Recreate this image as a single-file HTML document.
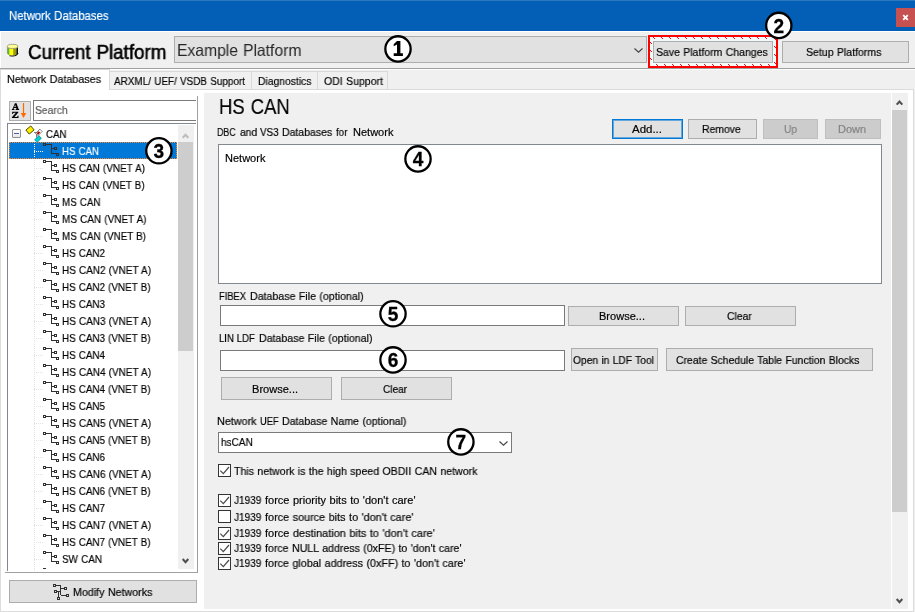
<!DOCTYPE html>
<html><head><meta charset="utf-8"><title>Network Databases</title>
<style>
html,body{margin:0;padding:0;}
body{width:915px;height:612px;position:relative;overflow:hidden;background:#f0f0f0;font-family:"Liberation Sans",sans-serif;}
.b{position:absolute;box-sizing:border-box;}
.t{position:absolute;white-space:pre;will-change:transform;transform-origin:0 0;-webkit-text-stroke:0.18px currentColor;font-family:"Liberation Sans",sans-serif;}
</style></head><body>
<div class="b" style="left:0px;top:0px;width:915px;height:31px;background:#035fb5;border-top:1px solid #2a78c2;"></div>
<div class="b" style="left:0px;top:31px;width:1px;height:58px;background:#fff;"></div>
<div class="b" style="left:0px;top:31px;width:915px;height:1px;background:#fff;"></div>
<div class="b" style="left:896px;top:8px;width:19px;height:19px;background:#c75050;"><svg width="19" height="19" style="position:absolute;left:0;top:0"><path d="M7.2 7.2 L11.8 11.8 M11.8 7.2 L7.2 11.8" stroke="#fff" stroke-width="1.8" fill="none"/></svg></div>
<div class="b" style="left:0px;top:68px;width:915px;height:1px;background:#a0a0a0;"></div>
<div class="b" style="left:0px;top:69px;width:915px;height:1px;background:#ffffff;"></div>
<div class="b" style="left:174px;top:36px;width:473px;height:27px;background:#e1e1e1;border:1px solid #adadad;"><svg width="12" height="8" style="position:absolute;left:458px;top:10px"><path d="M1.5 1.5 L5.5 5.2 L9.5 1.5" stroke="#444" stroke-width="1.1" fill="none"/></svg></div>
<div class="b" style="left:648px;top:35px;width:130px;height:33px;border:2px solid #f00;background:repeating-linear-gradient(45deg,#f2fbfb 0 4.98px,#f00 4.98px 5.66px);"></div>
<div class="b" style="left:652px;top:39px;width:122px;height:25px;background:#f2fbfb;"></div>
<div class="b" style="left:653px;top:41px;width:120px;height:22px;background:#e1e1e1;border:1px solid #adadad;"></div>
<div class="b" style="left:782px;top:41px;width:127px;height:22px;background:#e1e1e1;border:1px solid #adadad;"></div>
<div class="b" style="left:0px;top:89px;width:914px;height:523px;background:#fff;border:1px solid #dcdcdc;"></div>
<div class="b" style="left:109px;top:71px;width:143px;height:19px;background:#f0f0f0;border:1px solid #d9d9d9;"></div>
<div class="b" style="left:251px;top:71px;width:67px;height:19px;background:#f0f0f0;border:1px solid #d9d9d9;"></div>
<div class="b" style="left:317px;top:71px;width:71px;height:19px;background:#f0f0f0;border:1px solid #d9d9d9;"></div>
<div class="b" style="left:0px;top:69px;width:110px;height:21px;background:#fff;border:1px solid #d9d9d9;border-bottom:none;"></div>
<div class="b" style="left:9px;top:101px;width:22px;height:20px;background:#e1e1e1;border:1px solid #adadad;"></div>
<div class="b" style="left:33px;top:100px;width:163px;height:21px;background:#fff;border:1px solid #7a7a7a;border-right:none;"></div>
<div class="b" style="left:7px;top:123px;width:189px;height:448px;background:#fff;border:1px solid #828790;border-right:none;border-bottom:none;"></div>
<div class="b" style="left:197px;top:96px;width:1px;height:477px;background:#a0a0a0;"></div>
<div class="b" style="left:5px;top:572px;width:193px;height:1px;background:#a0a0a0;"></div>
<div class="b" style="left:178px;top:125px;width:16px;height:444px;background:#f0f0f0;"></div>
<div class="b" style="left:178px;top:142px;width:15px;height:209px;background:#cdcdcd;"></div>
<div class="b" style="left:9px;top:142px;width:168px;height:17px;background:#0078d7;outline:1px dotted #ff8728;outline-offset:-1px;"></div>
<div class="b" style="left:9px;top:580px;width:188px;height:23px;background:#e1e1e1;border:1px solid #adadad;"></div>
<div class="b" style="left:204px;top:93px;width:687px;height:516px;background:#f0f0f0;"></div>
<div class="b" style="left:892px;top:93px;width:16px;height:516px;background:#f0f0f0;"></div>
<div class="b" style="left:892px;top:110px;width:15px;height:402px;background:#cdcdcd;"></div>
<div class="b" style="left:612px;top:119px;width:71px;height:20px;background:#e1e1e1;border:1px solid #0078d7;box-shadow:inset 0 0 0 1px rgba(0,120,215,.55);"></div>
<div class="b" style="left:688px;top:119px;width:69px;height:20px;background:#e1e1e1;border:1px solid #adadad;"></div>
<div class="b" style="left:763px;top:119px;width:55px;height:20px;background:#cccccc;border:1px solid #bfbfbf;"></div>
<div class="b" style="left:825px;top:119px;width:56px;height:20px;background:#cccccc;border:1px solid #bfbfbf;"></div>
<div class="b" style="left:218px;top:144px;width:664px;height:140px;background:#fff;border:1px solid #828790;"></div>
<div class="b" style="left:220px;top:305px;width:345px;height:21px;background:#fff;border:1px solid #7a7a7a;"></div>
<div class="b" style="left:568px;top:306px;width:111px;height:20px;background:#e1e1e1;border:1px solid #adadad;"></div>
<div class="b" style="left:685px;top:306px;width:111px;height:20px;background:#e1e1e1;border:1px solid #adadad;"></div>
<div class="b" style="left:220px;top:350px;width:345px;height:21px;background:#fff;border:1px solid #7a7a7a;"></div>
<div class="b" style="left:571px;top:348px;width:87px;height:23px;background:#e1e1e1;border:1px solid #adadad;"></div>
<div class="b" style="left:666px;top:348px;width:207px;height:23px;background:#e1e1e1;border:1px solid #adadad;"></div>
<div class="b" style="left:221px;top:377px;width:111px;height:23px;background:#e1e1e1;border:1px solid #adadad;"></div>
<div class="b" style="left:341px;top:377px;width:111px;height:23px;background:#e1e1e1;border:1px solid #adadad;"></div>
<div class="b" style="left:218px;top:432px;width:294px;height:21px;background:#fff;border:1px solid #7a7a7a;"><svg width="12" height="8" style="position:absolute;left:279px;top:7px"><path d="M1.5 1.5 L5.5 5.2 L9.5 1.5" stroke="#444" stroke-width="1.1" fill="none"/></svg></div>
<div class="b" style="left:218px;top:464px;width:13px;height:13px;background:#fff;border:1px solid #333;"><svg width="13" height="13" style="position:absolute;left:-1px;top:-1px"><path d="M2.3 6.6 L5.3 9.7 L11 3" stroke="#4a4a4a" stroke-width="1.2" fill="none"/></svg></div>
<div class="b" style="left:218px;top:494px;width:13px;height:13px;background:#fff;border:1px solid #333;"><svg width="13" height="13" style="position:absolute;left:-1px;top:-1px"><path d="M2.3 6.6 L5.3 9.7 L11 3" stroke="#4a4a4a" stroke-width="1.2" fill="none"/></svg></div>
<div class="b" style="left:218px;top:510px;width:13px;height:13px;background:#fff;border:1px solid #333;"></div>
<div class="b" style="left:218px;top:527px;width:13px;height:13px;background:#fff;border:1px solid #333;"><svg width="13" height="13" style="position:absolute;left:-1px;top:-1px"><path d="M2.3 6.6 L5.3 9.7 L11 3" stroke="#4a4a4a" stroke-width="1.2" fill="none"/></svg></div>
<div class="b" style="left:218px;top:542px;width:13px;height:13px;background:#fff;border:1px solid #333;"><svg width="13" height="13" style="position:absolute;left:-1px;top:-1px"><path d="M2.3 6.6 L5.3 9.7 L11 3" stroke="#4a4a4a" stroke-width="1.2" fill="none"/></svg></div>
<div class="b" style="left:218px;top:557px;width:13px;height:13px;background:#fff;border:1px solid #333;"><svg width="13" height="13" style="position:absolute;left:-1px;top:-1px"><path d="M2.3 6.6 L5.3 9.7 L11 3" stroke="#4a4a4a" stroke-width="1.2" fill="none"/></svg></div>
<div class="b" style="left:34px;top:160px;width:1px;height:411px;background:linear-gradient(#e2e2e2 50%,transparent 50%) 0 0/1px 2px;"></div>
<div class="b" style="left:34px;top:151px;width:9px;height:1px;background:linear-gradient(90deg,#fff 50%,transparent 50%) 0 0/2px 1px;"></div>
<div class="b" style="left:34px;top:168px;width:9px;height:1px;background:linear-gradient(90deg,#e2e2e2 50%,transparent 50%) 0 0/2px 1px;"></div>
<div class="b" style="left:34px;top:185px;width:9px;height:1px;background:linear-gradient(90deg,#e2e2e2 50%,transparent 50%) 0 0/2px 1px;"></div>
<div class="b" style="left:34px;top:202px;width:9px;height:1px;background:linear-gradient(90deg,#e2e2e2 50%,transparent 50%) 0 0/2px 1px;"></div>
<div class="b" style="left:34px;top:219px;width:9px;height:1px;background:linear-gradient(90deg,#e2e2e2 50%,transparent 50%) 0 0/2px 1px;"></div>
<div class="b" style="left:34px;top:236px;width:9px;height:1px;background:linear-gradient(90deg,#e2e2e2 50%,transparent 50%) 0 0/2px 1px;"></div>
<div class="b" style="left:34px;top:253px;width:9px;height:1px;background:linear-gradient(90deg,#e2e2e2 50%,transparent 50%) 0 0/2px 1px;"></div>
<div class="b" style="left:34px;top:270px;width:9px;height:1px;background:linear-gradient(90deg,#e2e2e2 50%,transparent 50%) 0 0/2px 1px;"></div>
<div class="b" style="left:34px;top:287px;width:9px;height:1px;background:linear-gradient(90deg,#e2e2e2 50%,transparent 50%) 0 0/2px 1px;"></div>
<div class="b" style="left:34px;top:304px;width:9px;height:1px;background:linear-gradient(90deg,#e2e2e2 50%,transparent 50%) 0 0/2px 1px;"></div>
<div class="b" style="left:34px;top:321px;width:9px;height:1px;background:linear-gradient(90deg,#e2e2e2 50%,transparent 50%) 0 0/2px 1px;"></div>
<div class="b" style="left:34px;top:338px;width:9px;height:1px;background:linear-gradient(90deg,#e2e2e2 50%,transparent 50%) 0 0/2px 1px;"></div>
<div class="b" style="left:34px;top:355px;width:9px;height:1px;background:linear-gradient(90deg,#e2e2e2 50%,transparent 50%) 0 0/2px 1px;"></div>
<div class="b" style="left:34px;top:372px;width:9px;height:1px;background:linear-gradient(90deg,#e2e2e2 50%,transparent 50%) 0 0/2px 1px;"></div>
<div class="b" style="left:34px;top:389px;width:9px;height:1px;background:linear-gradient(90deg,#e2e2e2 50%,transparent 50%) 0 0/2px 1px;"></div>
<div class="b" style="left:34px;top:406px;width:9px;height:1px;background:linear-gradient(90deg,#e2e2e2 50%,transparent 50%) 0 0/2px 1px;"></div>
<div class="b" style="left:34px;top:423px;width:9px;height:1px;background:linear-gradient(90deg,#e2e2e2 50%,transparent 50%) 0 0/2px 1px;"></div>
<div class="b" style="left:34px;top:440px;width:9px;height:1px;background:linear-gradient(90deg,#e2e2e2 50%,transparent 50%) 0 0/2px 1px;"></div>
<div class="b" style="left:34px;top:457px;width:9px;height:1px;background:linear-gradient(90deg,#e2e2e2 50%,transparent 50%) 0 0/2px 1px;"></div>
<div class="b" style="left:34px;top:474px;width:9px;height:1px;background:linear-gradient(90deg,#e2e2e2 50%,transparent 50%) 0 0/2px 1px;"></div>
<div class="b" style="left:34px;top:491px;width:9px;height:1px;background:linear-gradient(90deg,#e2e2e2 50%,transparent 50%) 0 0/2px 1px;"></div>
<div class="b" style="left:34px;top:508px;width:9px;height:1px;background:linear-gradient(90deg,#e2e2e2 50%,transparent 50%) 0 0/2px 1px;"></div>
<div class="b" style="left:34px;top:525px;width:9px;height:1px;background:linear-gradient(90deg,#e2e2e2 50%,transparent 50%) 0 0/2px 1px;"></div>
<div class="b" style="left:34px;top:542px;width:9px;height:1px;background:linear-gradient(90deg,#e2e2e2 50%,transparent 50%) 0 0/2px 1px;"></div>
<div class="b" style="left:34px;top:559px;width:9px;height:1px;background:linear-gradient(90deg,#e2e2e2 50%,transparent 50%) 0 0/2px 1px;"></div>
<div class="b" style="left:34px;top:144px;width:1px;height:14px;background:linear-gradient(#fff 50%,transparent 50%) 0 0/1px 2px;"></div>
<svg class="b" shape-rendering="crispEdges" width="16" height="15" style="left:43px;top:142px"><g fill="none" stroke="#303030" stroke-width="1"><rect x="0.5" y="1.5" width="2" height="2"/><rect x="11.5" y="5.5" width="2" height="2"/><rect x="13.5" y="11.5" width="2" height="2"/><path d="M3 2.5H9 M8.5 2V12 M9 6.5H11 M9 11.5H13"/></g></svg>
<svg class="b" shape-rendering="crispEdges" width="16" height="15" style="left:43px;top:159px"><g fill="none" stroke="#303030" stroke-width="1"><rect x="0.5" y="1.5" width="2" height="2"/><rect x="11.5" y="5.5" width="2" height="2"/><rect x="13.5" y="11.5" width="2" height="2"/><path d="M3 2.5H9 M8.5 2V12 M9 6.5H11 M9 11.5H13"/></g></svg>
<svg class="b" shape-rendering="crispEdges" width="16" height="15" style="left:43px;top:176px"><g fill="none" stroke="#303030" stroke-width="1"><rect x="0.5" y="1.5" width="2" height="2"/><rect x="11.5" y="5.5" width="2" height="2"/><rect x="13.5" y="11.5" width="2" height="2"/><path d="M3 2.5H9 M8.5 2V12 M9 6.5H11 M9 11.5H13"/></g></svg>
<svg class="b" shape-rendering="crispEdges" width="16" height="15" style="left:43px;top:193px"><g fill="none" stroke="#303030" stroke-width="1"><rect x="0.5" y="1.5" width="2" height="2"/><rect x="11.5" y="5.5" width="2" height="2"/><rect x="13.5" y="11.5" width="2" height="2"/><path d="M3 2.5H9 M8.5 2V12 M9 6.5H11 M9 11.5H13"/></g></svg>
<svg class="b" shape-rendering="crispEdges" width="16" height="15" style="left:43px;top:210px"><g fill="none" stroke="#303030" stroke-width="1"><rect x="0.5" y="1.5" width="2" height="2"/><rect x="11.5" y="5.5" width="2" height="2"/><rect x="13.5" y="11.5" width="2" height="2"/><path d="M3 2.5H9 M8.5 2V12 M9 6.5H11 M9 11.5H13"/></g></svg>
<svg class="b" shape-rendering="crispEdges" width="16" height="15" style="left:43px;top:227px"><g fill="none" stroke="#303030" stroke-width="1"><rect x="0.5" y="1.5" width="2" height="2"/><rect x="11.5" y="5.5" width="2" height="2"/><rect x="13.5" y="11.5" width="2" height="2"/><path d="M3 2.5H9 M8.5 2V12 M9 6.5H11 M9 11.5H13"/></g></svg>
<svg class="b" shape-rendering="crispEdges" width="16" height="15" style="left:43px;top:244px"><g fill="none" stroke="#303030" stroke-width="1"><rect x="0.5" y="1.5" width="2" height="2"/><rect x="11.5" y="5.5" width="2" height="2"/><rect x="13.5" y="11.5" width="2" height="2"/><path d="M3 2.5H9 M8.5 2V12 M9 6.5H11 M9 11.5H13"/></g></svg>
<svg class="b" shape-rendering="crispEdges" width="16" height="15" style="left:43px;top:261px"><g fill="none" stroke="#303030" stroke-width="1"><rect x="0.5" y="1.5" width="2" height="2"/><rect x="11.5" y="5.5" width="2" height="2"/><rect x="13.5" y="11.5" width="2" height="2"/><path d="M3 2.5H9 M8.5 2V12 M9 6.5H11 M9 11.5H13"/></g></svg>
<svg class="b" shape-rendering="crispEdges" width="16" height="15" style="left:43px;top:278px"><g fill="none" stroke="#303030" stroke-width="1"><rect x="0.5" y="1.5" width="2" height="2"/><rect x="11.5" y="5.5" width="2" height="2"/><rect x="13.5" y="11.5" width="2" height="2"/><path d="M3 2.5H9 M8.5 2V12 M9 6.5H11 M9 11.5H13"/></g></svg>
<svg class="b" shape-rendering="crispEdges" width="16" height="15" style="left:43px;top:295px"><g fill="none" stroke="#303030" stroke-width="1"><rect x="0.5" y="1.5" width="2" height="2"/><rect x="11.5" y="5.5" width="2" height="2"/><rect x="13.5" y="11.5" width="2" height="2"/><path d="M3 2.5H9 M8.5 2V12 M9 6.5H11 M9 11.5H13"/></g></svg>
<svg class="b" shape-rendering="crispEdges" width="16" height="15" style="left:43px;top:312px"><g fill="none" stroke="#303030" stroke-width="1"><rect x="0.5" y="1.5" width="2" height="2"/><rect x="11.5" y="5.5" width="2" height="2"/><rect x="13.5" y="11.5" width="2" height="2"/><path d="M3 2.5H9 M8.5 2V12 M9 6.5H11 M9 11.5H13"/></g></svg>
<svg class="b" shape-rendering="crispEdges" width="16" height="15" style="left:43px;top:329px"><g fill="none" stroke="#303030" stroke-width="1"><rect x="0.5" y="1.5" width="2" height="2"/><rect x="11.5" y="5.5" width="2" height="2"/><rect x="13.5" y="11.5" width="2" height="2"/><path d="M3 2.5H9 M8.5 2V12 M9 6.5H11 M9 11.5H13"/></g></svg>
<svg class="b" shape-rendering="crispEdges" width="16" height="15" style="left:43px;top:346px"><g fill="none" stroke="#303030" stroke-width="1"><rect x="0.5" y="1.5" width="2" height="2"/><rect x="11.5" y="5.5" width="2" height="2"/><rect x="13.5" y="11.5" width="2" height="2"/><path d="M3 2.5H9 M8.5 2V12 M9 6.5H11 M9 11.5H13"/></g></svg>
<svg class="b" shape-rendering="crispEdges" width="16" height="15" style="left:43px;top:363px"><g fill="none" stroke="#303030" stroke-width="1"><rect x="0.5" y="1.5" width="2" height="2"/><rect x="11.5" y="5.5" width="2" height="2"/><rect x="13.5" y="11.5" width="2" height="2"/><path d="M3 2.5H9 M8.5 2V12 M9 6.5H11 M9 11.5H13"/></g></svg>
<svg class="b" shape-rendering="crispEdges" width="16" height="15" style="left:43px;top:380px"><g fill="none" stroke="#303030" stroke-width="1"><rect x="0.5" y="1.5" width="2" height="2"/><rect x="11.5" y="5.5" width="2" height="2"/><rect x="13.5" y="11.5" width="2" height="2"/><path d="M3 2.5H9 M8.5 2V12 M9 6.5H11 M9 11.5H13"/></g></svg>
<svg class="b" shape-rendering="crispEdges" width="16" height="15" style="left:43px;top:397px"><g fill="none" stroke="#303030" stroke-width="1"><rect x="0.5" y="1.5" width="2" height="2"/><rect x="11.5" y="5.5" width="2" height="2"/><rect x="13.5" y="11.5" width="2" height="2"/><path d="M3 2.5H9 M8.5 2V12 M9 6.5H11 M9 11.5H13"/></g></svg>
<svg class="b" shape-rendering="crispEdges" width="16" height="15" style="left:43px;top:414px"><g fill="none" stroke="#303030" stroke-width="1"><rect x="0.5" y="1.5" width="2" height="2"/><rect x="11.5" y="5.5" width="2" height="2"/><rect x="13.5" y="11.5" width="2" height="2"/><path d="M3 2.5H9 M8.5 2V12 M9 6.5H11 M9 11.5H13"/></g></svg>
<svg class="b" shape-rendering="crispEdges" width="16" height="15" style="left:43px;top:431px"><g fill="none" stroke="#303030" stroke-width="1"><rect x="0.5" y="1.5" width="2" height="2"/><rect x="11.5" y="5.5" width="2" height="2"/><rect x="13.5" y="11.5" width="2" height="2"/><path d="M3 2.5H9 M8.5 2V12 M9 6.5H11 M9 11.5H13"/></g></svg>
<svg class="b" shape-rendering="crispEdges" width="16" height="15" style="left:43px;top:448px"><g fill="none" stroke="#303030" stroke-width="1"><rect x="0.5" y="1.5" width="2" height="2"/><rect x="11.5" y="5.5" width="2" height="2"/><rect x="13.5" y="11.5" width="2" height="2"/><path d="M3 2.5H9 M8.5 2V12 M9 6.5H11 M9 11.5H13"/></g></svg>
<svg class="b" shape-rendering="crispEdges" width="16" height="15" style="left:43px;top:465px"><g fill="none" stroke="#303030" stroke-width="1"><rect x="0.5" y="1.5" width="2" height="2"/><rect x="11.5" y="5.5" width="2" height="2"/><rect x="13.5" y="11.5" width="2" height="2"/><path d="M3 2.5H9 M8.5 2V12 M9 6.5H11 M9 11.5H13"/></g></svg>
<svg class="b" shape-rendering="crispEdges" width="16" height="15" style="left:43px;top:482px"><g fill="none" stroke="#303030" stroke-width="1"><rect x="0.5" y="1.5" width="2" height="2"/><rect x="11.5" y="5.5" width="2" height="2"/><rect x="13.5" y="11.5" width="2" height="2"/><path d="M3 2.5H9 M8.5 2V12 M9 6.5H11 M9 11.5H13"/></g></svg>
<svg class="b" shape-rendering="crispEdges" width="16" height="15" style="left:43px;top:499px"><g fill="none" stroke="#303030" stroke-width="1"><rect x="0.5" y="1.5" width="2" height="2"/><rect x="11.5" y="5.5" width="2" height="2"/><rect x="13.5" y="11.5" width="2" height="2"/><path d="M3 2.5H9 M8.5 2V12 M9 6.5H11 M9 11.5H13"/></g></svg>
<svg class="b" shape-rendering="crispEdges" width="16" height="15" style="left:43px;top:516px"><g fill="none" stroke="#303030" stroke-width="1"><rect x="0.5" y="1.5" width="2" height="2"/><rect x="11.5" y="5.5" width="2" height="2"/><rect x="13.5" y="11.5" width="2" height="2"/><path d="M3 2.5H9 M8.5 2V12 M9 6.5H11 M9 11.5H13"/></g></svg>
<svg class="b" shape-rendering="crispEdges" width="16" height="15" style="left:43px;top:533px"><g fill="none" stroke="#303030" stroke-width="1"><rect x="0.5" y="1.5" width="2" height="2"/><rect x="11.5" y="5.5" width="2" height="2"/><rect x="13.5" y="11.5" width="2" height="2"/><path d="M3 2.5H9 M8.5 2V12 M9 6.5H11 M9 11.5H13"/></g></svg>
<svg class="b" shape-rendering="crispEdges" width="16" height="15" style="left:43px;top:550px"><g fill="none" stroke="#303030" stroke-width="1"><rect x="0.5" y="1.5" width="2" height="2"/><rect x="11.5" y="5.5" width="2" height="2"/><rect x="13.5" y="11.5" width="2" height="2"/><path d="M3 2.5H9 M8.5 2V12 M9 6.5H11 M9 11.5H13"/></g></svg>
<div class="b" style="left:43px;top:568px;width:16px;height:1px;overflow:hidden"><svg class="b" shape-rendering="crispEdges" width="16" height="15" style="left:0;top:-1px"><g fill="none" stroke="#303030" stroke-width="1"><rect x="0.5" y="1.5" width="2" height="2"/><rect x="11.5" y="5.5" width="2" height="2"/><rect x="13.5" y="11.5" width="2" height="2"/><path d="M3 2.5H9 M8.5 2V12 M9 6.5H11 M9 11.5H13"/></g></svg></div>

<!-- expand box -->
<div class="b" style="left:12px;top:129px;width:9px;height:9px;border:1px solid #919191;background:linear-gradient(#fff,#e8e8e8);box-sizing:border-box;border-radius:1px"></div>
<div class="b" style="left:14px;top:133px;width:5px;height:1px;background:#4b63a7"></div>
<!-- CAN icon -->
<svg class="b" width="18" height="17" style="left:25px;top:125px">
 <path d="M9 7.5H11.5V12.5H13" stroke="#808080" stroke-width="1" fill="none"/>
 <g transform="translate(5,5) rotate(-40)"><rect x="-3.2" y="-2.6" width="6.4" height="5.2" fill="#ffee00" stroke="#4a4500" stroke-width="0.9"/></g>
 <g transform="translate(13.9,7.4) rotate(-45)"><rect x="-3" y="-1.6" width="6" height="3.2" fill="#fff" stroke="#333" stroke-width="0.6"/><rect x="-2.2" y="-1" width="3" height="2" fill="#b00000"/></g>
 <g transform="translate(13,14) rotate(-45)"><rect x="-3" y="-1.8" width="6" height="3.6" fill="#00d0d8" stroke="#006d70" stroke-width="0.6"/></g>
</svg>
<!-- AZ icon -->
<svg class="b" width="22" height="20" style="left:9px;top:101px">
 <path fill-rule="evenodd" d="M5.9 2.2 H7.5 L9.6 8 H10.1 V8.9 H6.7 V8 H7.5 L7.15 6.9 H4.95 L4.6 8 H5.4 V8.9 H2.9 V8 H3.5 Z M5.3 5.9 H6.85 L6.1 3.7 Z" fill="#000"/>
 <path d="M3.2 10.7 H9.3 V11.6 L5.5 16.1 H7.6 Q8.5 16.1 8.7 14.8 H9.5 V17.1 H2.9 V16.2 L6.8 11.7 H5.1 Q4.1 11.7 4 12.9 H3.2 Z" fill="#000"/>
 <path d="M14.5 2V15" stroke="#ff6a00" stroke-width="1.2"/><path d="M11.8 12H17.2L14.5 17Z" fill="#ff6a00"/>
</svg>
<!-- cylinder -->
<svg class="b" width="14" height="15" style="left:6px;top:43px">
 <path d="M0.4 3.4 C0.4 0.2 12.6 0.2 12.6 3.4 V10.6 C12.6 14.4 0.4 14.4 0.4 10.6 Z" fill="#fff"/>
 <clipPath id="cyl"><path d="M1.2 3.6 V10.3 C1.2 13.4 12 13.4 12 10.3 V3.6 Z"/></clipPath>
 <g clip-path="url(#cyl)">
  <rect x="1" y="3" width="2.6" height="11" fill="#5fb81a"/>
  <rect x="3.6" y="3" width="3.6" height="11" fill="#ffff00"/>
  <rect x="7.2" y="3" width="3.2" height="11" fill="#9c9c10"/>
  <rect x="10.4" y="3" width="2" height="11" fill="#101000"/>
  <path d="M1 11.2 C2 13.6 11 13.6 12 11.2 V14 H1Z" fill="#20200a"/>
 </g>
 <path d="M1.3 4 V10.4" stroke="#8a8a8a" stroke-width="0.7" fill="none"/><path d="M3.5 12.7 C6.5 13.5 11.8 13 12 10" stroke="#111" stroke-width="1" fill="none"/>
 <ellipse cx="6.6" cy="3.4" rx="5.3" ry="2.1" fill="#ffff70" stroke="#8a8a8a" stroke-width="0.8"/>
 <path d="M3 3.4H9.6" stroke="#fffff0" stroke-width="1.6" stroke-dasharray="1 1"/>
</svg>
<!-- modify icon -->
<svg class="b" shape-rendering="crispEdges" width="17" height="17" style="left:53px;top:584px">
 <g fill="none" stroke="#303030" stroke-width="1">
 <rect x="0.5" y="0.5" width="2" height="2"/><rect x="11.5" y="3.5" width="2" height="2"/><rect x="1.5" y="6.5" width="2" height="2"/><rect x="13.5" y="10.5" width="2" height="2"/><rect x="4.5" y="13.5" width="2" height="2"/>
 <path d="M3 1.5H8 M7.5 1V11 M8 4.5H11 M8 11.5H13 M4 7.5H7 M5.5 8V13"/></g>
</svg>
<!-- scroll arrows -->
<svg class="b" width="16" height="16" style="left:178px;top:126px"><path d="M4.7 11.8 L7.5 8.7 L10.3 11.8" stroke="#bdbdbd" stroke-width="2.1" fill="none"/></svg>
<svg class="b" width="16" height="16" style="left:178px;top:553px"><path d="M4.7 6 L7.5 9.1 L10.3 6" stroke="#505050" stroke-width="2.1" fill="none"/></svg>
<svg class="b" width="16" height="16" style="left:892px;top:94px"><path d="M4.7 10.6 L7.5 7.5 L10.3 10.6" stroke="#505050" stroke-width="2.1" fill="none"/></svg>
<svg class="b" width="16" height="16" style="left:892px;top:593px"><path d="M4.7 6 L7.5 9.1 L10.3 6" stroke="#505050" stroke-width="2.1" fill="none"/></svg>

<span class="t" style="left:8.7px;top:8.34px;font-size:12px;line-height:16px;word-spacing:0.48px;transform:scaleX(0.9458);color:#fff;font-weight:400;">Network Databases</span>
<span class="t" style="left:28.4px;top:39.71px;font-size:19.3px;line-height:25px;word-spacing:0.77px;transform:scaleX(0.9724);color:#000;font-weight:400;-webkit-text-stroke:0.6px #000;">Current Platform</span>
<span class="t" style="left:176.5px;top:39.78px;font-size:16.5px;line-height:21px;word-spacing:0.66px;transform:scaleX(0.9505);color:#262626;font-weight:400;-webkit-text-stroke:0;">Example Platform</span>
<span class="t" style="left:656.1px;top:44.79px;font-size:11px;line-height:14px;word-spacing:0.44px;transform:scaleX(0.9550);color:#000;font-weight:400;">Save Platform Changes</span>
<span class="t" style="left:806.1px;top:44.79px;font-size:11px;line-height:14px;word-spacing:0.44px;transform:scaleX(0.9580);color:#000;font-weight:400;">Setup Platforms</span>
<span class="t" style="left:6.5px;top:72.19px;font-size:11px;line-height:14px;word-spacing:0.44px;transform:scaleX(0.9747);color:#000;font-weight:400;">Network Databases</span>
<span class="t" style="left:113.9px;top:73.79px;font-size:11px;line-height:14px;word-spacing:0.44px;transform:scaleX(0.9035);color:#000;font-weight:400;">ARXML/ UEF/ VSDB Support</span>
<span class="t" style="left:257.8px;top:73.79px;font-size:11px;line-height:14px;word-spacing:0.44px;transform:scaleX(0.9409);color:#000;font-weight:400;">Diagnostics</span>
<span class="t" style="left:323.5px;top:73.79px;font-size:11px;line-height:14px;word-spacing:0.44px;transform:scaleX(0.9579);color:#000;font-weight:400;">ODI Support</span>
<span class="t" style="left:34.8px;top:103.19px;font-size:11px;line-height:14px;word-spacing:0.44px;transform:scaleX(0.9381);color:#585858;font-weight:400;">Search</span>
<span class="t" style="left:218.8px;top:91.71px;font-size:22.2px;line-height:29px;word-spacing:0.89px;transform:scaleX(0.8344);color:#000;font-weight:400;">HS CAN</span>
<span class="t" style="left:217.1px;top:124.89px;font-size:11px;line-height:14px;word-spacing:0.44px;transform:scaleX(0.8005);color:#000;font-weight:400;">DBC</span>
<span class="t" style="left:240.3px;top:124.89px;font-size:11px;line-height:14px;word-spacing:0.44px;transform:scaleX(0.9369);color:#000;font-weight:400;">and</span>
<span class="t" style="left:260.4px;top:124.89px;font-size:11px;line-height:14px;word-spacing:0.44px;transform:scaleX(0.8944);color:#000;font-weight:400;">VS3</span>
<span class="t" style="left:282.3px;top:124.89px;font-size:11px;line-height:14px;word-spacing:0.44px;transform:scaleX(0.9545);color:#000;font-weight:400;">Databases</span>
<span class="t" style="left:335.8px;top:124.89px;font-size:11px;line-height:14px;word-spacing:0.44px;transform:scaleX(0.8876);color:#000;font-weight:400;">for</span>
<span class="t" style="left:352.9px;top:124.89px;font-size:11px;line-height:14px;word-spacing:0.44px;transform:scaleX(1.0014);color:#000;font-weight:400;">Network</span>
<span class="t" style="left:631.5px;top:121.89px;font-size:11px;line-height:14px;word-spacing:0.44px;transform:scaleX(1.0435);color:#000;font-weight:400;">Add...</span>
<span class="t" style="left:702.1px;top:121.89px;font-size:11px;line-height:14px;word-spacing:0.44px;transform:scaleX(0.9471);color:#000;font-weight:400;">Remove</span>
<span class="t" style="left:783.5px;top:121.89px;font-size:11px;line-height:14px;word-spacing:0.44px;transform:scaleX(0.9244);color:#838383;font-weight:400;">Up</span>
<span class="t" style="left:837.5px;top:121.89px;font-size:11px;line-height:14px;word-spacing:0.44px;transform:scaleX(0.9956);color:#838383;font-weight:400;">Down</span>
<span class="t" style="left:225.1px;top:150.89px;font-size:11px;line-height:14px;word-spacing:0.44px;transform:scaleX(1.0014);color:#000;font-weight:400;">Network</span>
<span class="t" style="left:219.4px;top:289.19px;font-size:11px;line-height:14px;word-spacing:0.44px;transform:scaleX(0.8491);color:#000;font-weight:400;">FIBEX</span>
<span class="t" style="left:250.2px;top:289.19px;font-size:11px;line-height:14px;word-spacing:0.44px;transform:scaleX(0.9662);color:#000;font-weight:400;">Database File (optional)</span>
<span class="t" style="left:599.1px;top:309.19px;font-size:11px;line-height:14px;word-spacing:0.44px;transform:scaleX(1.0031);color:#000;font-weight:400;">Browse...</span>
<span class="t" style="left:727.1px;top:309.19px;font-size:11px;line-height:14px;word-spacing:0.44px;transform:scaleX(0.9431);color:#000;font-weight:400;">Clear</span>
<span class="t" style="left:219.4px;top:331.19px;font-size:11px;line-height:14px;word-spacing:0.44px;transform:scaleX(0.8646);color:#000;font-weight:400;">LIN LDF</span>
<span class="t" style="left:259.4px;top:331.19px;font-size:11px;line-height:14px;word-spacing:0.44px;transform:scaleX(0.9645);color:#000;font-weight:400;">Database File (optional)</span>
<span class="t" style="left:573.1px;top:353.19px;font-size:11px;line-height:14px;word-spacing:0.44px;transform:scaleX(0.9339);color:#000;font-weight:400;">Open in LDF Tool</span>
<span class="t" style="left:676.1px;top:353.19px;font-size:11px;line-height:14px;word-spacing:0.44px;transform:scaleX(0.9475);color:#000;font-weight:400;">Create Schedule Table Function Blocks</span>
<span class="t" style="left:252.1px;top:382.29px;font-size:11px;line-height:14px;word-spacing:0.44px;transform:scaleX(1.0052);color:#000;font-weight:400;">Browse...</span>
<span class="t" style="left:383.4px;top:382.29px;font-size:11px;line-height:14px;word-spacing:0.44px;transform:scaleX(0.9165);color:#000;font-weight:400;">Clear</span>
<span class="t" style="left:217.1px;top:414.19px;font-size:11px;line-height:14px;word-spacing:0.44px;transform:scaleX(0.9816);color:#000;font-weight:400;">Network</span>
<span class="t" style="left:260.4px;top:414.19px;font-size:11px;line-height:14px;word-spacing:0.44px;transform:scaleX(0.8455);color:#000;font-weight:400;">UEF</span>
<span class="t" style="left:282.3px;top:414.19px;font-size:11px;line-height:14px;word-spacing:0.44px;transform:scaleX(0.9629);color:#000;font-weight:400;">Database Name (optional)</span>
<span class="t" style="left:220.7px;top:434.79px;font-size:11px;line-height:14px;word-spacing:0.44px;transform:scaleX(0.9126);color:#000;font-weight:400;">hsCAN</span>
<span class="t" style="left:233.5px;top:464.19px;font-size:11px;line-height:14px;word-spacing:0.44px;transform:scaleX(0.9622);color:#000;font-weight:400;">This network is the high speed OBDII CAN network</span>
<span class="t" style="left:233.7px;top:493.29px;font-size:11px;line-height:14px;word-spacing:0.44px;transform:scaleX(0.9138);color:#000;font-weight:400;">J1939</span>
<span class="t" style="left:264.6px;top:493.29px;font-size:11px;line-height:14px;word-spacing:0.44px;transform:scaleX(1.0010);color:#000;font-weight:400;">force priority bits to 'don't care'</span>
<span class="t" style="left:233.7px;top:509.69px;font-size:11px;line-height:14px;word-spacing:0.44px;transform:scaleX(0.9138);color:#000;font-weight:400;">J1939</span>
<span class="t" style="left:264.6px;top:509.69px;font-size:11px;line-height:14px;word-spacing:0.44px;transform:scaleX(0.9876);color:#000;font-weight:400;">force source bits to 'don't care'</span>
<span class="t" style="left:233.7px;top:526.49px;font-size:11px;line-height:14px;word-spacing:0.44px;transform:scaleX(0.9138);color:#000;font-weight:400;">J1939</span>
<span class="t" style="left:264.6px;top:526.49px;font-size:11px;line-height:14px;word-spacing:0.44px;transform:scaleX(0.9956);color:#000;font-weight:400;">force destination bits to 'don't care'</span>
<span class="t" style="left:233.7px;top:541.49px;font-size:11px;line-height:14px;word-spacing:0.44px;transform:scaleX(0.9138);color:#000;font-weight:400;">J1939</span>
<span class="t" style="left:264.6px;top:541.49px;font-size:11px;line-height:14px;word-spacing:0.44px;transform:scaleX(0.9653);color:#000;font-weight:400;">force NULL address (0xFE) to 'don't care'</span>
<span class="t" style="left:233.7px;top:556.49px;font-size:11px;line-height:14px;word-spacing:0.44px;transform:scaleX(0.9138);color:#000;font-weight:400;">J1939</span>
<span class="t" style="left:264.6px;top:556.49px;font-size:11px;line-height:14px;word-spacing:0.44px;transform:scaleX(0.9800);color:#000;font-weight:400;">force global address (0xFF) to 'don't care'</span>
<span class="t" style="left:73.1px;top:584.89px;font-size:11px;line-height:14px;word-spacing:0.44px;transform:scaleX(0.9713);color:#000;font-weight:400;">Modify Networks</span>
<span class="t" style="left:45.5px;top:126.99px;font-size:11px;line-height:14px;word-spacing:0.44px;transform:scaleX(0.8823);color:#000;font-weight:400;">CAN</span>
<span class="t" style="left:62.0px;top:144.09px;font-size:11px;line-height:14px;word-spacing:0.44px;transform:scaleX(0.8806);color:#fff;font-weight:400;">HS CAN</span>
<span class="t" style="left:62.0px;top:161.09px;font-size:11px;line-height:14px;word-spacing:0.44px;transform:scaleX(0.9002);color:#000;font-weight:400;">HS CAN (VNET A)</span>
<span class="t" style="left:62.0px;top:178.09px;font-size:11px;line-height:14px;word-spacing:0.44px;transform:scaleX(0.8890);color:#000;font-weight:400;">HS CAN (VNET B)</span>
<span class="t" style="left:62.0px;top:195.09px;font-size:11px;line-height:14px;word-spacing:0.44px;transform:scaleX(0.8905);color:#000;font-weight:400;">MS CAN</span>
<span class="t" style="left:62.0px;top:212.09px;font-size:11px;line-height:14px;word-spacing:0.44px;transform:scaleX(0.9045);color:#000;font-weight:400;">MS CAN (VNET A)</span>
<span class="t" style="left:62.0px;top:229.09px;font-size:11px;line-height:14px;word-spacing:0.44px;transform:scaleX(0.8935);color:#000;font-weight:400;">MS CAN (VNET B)</span>
<span class="t" style="left:62.0px;top:246.09px;font-size:11px;line-height:14px;word-spacing:0.44px;transform:scaleX(0.8935);color:#000;font-weight:400;">HS CAN2</span>
<span class="t" style="left:62.0px;top:263.09px;font-size:11px;line-height:14px;word-spacing:0.44px;transform:scaleX(0.9053);color:#000;font-weight:400;">HS CAN2 (VNET A)</span>
<span class="t" style="left:62.0px;top:280.09px;font-size:11px;line-height:14px;word-spacing:0.44px;transform:scaleX(0.8946);color:#000;font-weight:400;">HS CAN2 (VNET B)</span>
<span class="t" style="left:62.0px;top:297.09px;font-size:11px;line-height:14px;word-spacing:0.44px;transform:scaleX(0.8935);color:#000;font-weight:400;">HS CAN3</span>
<span class="t" style="left:62.0px;top:314.09px;font-size:11px;line-height:14px;word-spacing:0.44px;transform:scaleX(0.9053);color:#000;font-weight:400;">HS CAN3 (VNET A)</span>
<span class="t" style="left:62.0px;top:331.09px;font-size:11px;line-height:14px;word-spacing:0.44px;transform:scaleX(0.8946);color:#000;font-weight:400;">HS CAN3 (VNET B)</span>
<span class="t" style="left:62.0px;top:348.09px;font-size:11px;line-height:14px;word-spacing:0.44px;transform:scaleX(0.8935);color:#000;font-weight:400;">HS CAN4</span>
<span class="t" style="left:62.0px;top:365.09px;font-size:11px;line-height:14px;word-spacing:0.44px;transform:scaleX(0.9053);color:#000;font-weight:400;">HS CAN4 (VNET A)</span>
<span class="t" style="left:62.0px;top:382.09px;font-size:11px;line-height:14px;word-spacing:0.44px;transform:scaleX(0.8946);color:#000;font-weight:400;">HS CAN4 (VNET B)</span>
<span class="t" style="left:62.0px;top:399.09px;font-size:11px;line-height:14px;word-spacing:0.44px;transform:scaleX(0.8935);color:#000;font-weight:400;">HS CAN5</span>
<span class="t" style="left:62.0px;top:416.09px;font-size:11px;line-height:14px;word-spacing:0.44px;transform:scaleX(0.9053);color:#000;font-weight:400;">HS CAN5 (VNET A)</span>
<span class="t" style="left:62.0px;top:433.09px;font-size:11px;line-height:14px;word-spacing:0.44px;transform:scaleX(0.8946);color:#000;font-weight:400;">HS CAN5 (VNET B)</span>
<span class="t" style="left:62.0px;top:450.09px;font-size:11px;line-height:14px;word-spacing:0.44px;transform:scaleX(0.8935);color:#000;font-weight:400;">HS CAN6</span>
<span class="t" style="left:62.0px;top:467.09px;font-size:11px;line-height:14px;word-spacing:0.44px;transform:scaleX(0.9053);color:#000;font-weight:400;">HS CAN6 (VNET A)</span>
<span class="t" style="left:62.0px;top:484.09px;font-size:11px;line-height:14px;word-spacing:0.44px;transform:scaleX(0.8946);color:#000;font-weight:400;">HS CAN6 (VNET B)</span>
<span class="t" style="left:62.0px;top:501.09px;font-size:11px;line-height:14px;word-spacing:0.44px;transform:scaleX(0.8935);color:#000;font-weight:400;">HS CAN7</span>
<span class="t" style="left:62.0px;top:518.09px;font-size:11px;line-height:14px;word-spacing:0.44px;transform:scaleX(0.9053);color:#000;font-weight:400;">HS CAN7 (VNET A)</span>
<span class="t" style="left:62.0px;top:535.09px;font-size:11px;line-height:14px;word-spacing:0.44px;transform:scaleX(0.8946);color:#000;font-weight:400;">HS CAN7 (VNET B)</span>
<span class="t" style="left:62.0px;top:552.09px;font-size:11px;line-height:14px;word-spacing:0.44px;transform:scaleX(0.8998);color:#000;font-weight:400;">SW CAN</span>
<svg class="b" width="915" height="612" style="left:0;top:0"><circle cx="398" cy="48.9" r="12.65" fill="#fff" stroke="#000" stroke-width="2.3"/><path d="M393.7 44.199999999999996 L397 41.0 H400.4 V53.199999999999996 H402.9 V55.9 H393.7 V53.199999999999996 H397 V44.6 L393.7 46.3 Z" fill="#000"/><circle cx="778.8" cy="25.4" r="12.65" fill="#fff" stroke="#000" stroke-width="2.3"/><text transform="translate(778.8,0) scale(0.93,1)" x="0" y="32.699999999999996" text-anchor="middle" font-family="Liberation Sans" font-weight="700" font-size="20.5" fill="#000" stroke="#000" stroke-width="0.3">2</text><circle cx="158.9" cy="150.8" r="12.65" fill="#fff" stroke="#000" stroke-width="2.3"/><text transform="translate(158.9,0) scale(0.93,1)" x="0" y="158.10000000000002" text-anchor="middle" font-family="Liberation Sans" font-weight="700" font-size="20.5" fill="#000" stroke="#000" stroke-width="0.3">3</text><circle cx="418" cy="158.9" r="12.65" fill="#fff" stroke="#000" stroke-width="2.3"/><text transform="translate(418,0) scale(0.93,1)" x="0" y="166.20000000000002" text-anchor="middle" font-family="Liberation Sans" font-weight="700" font-size="20.5" fill="#000" stroke="#000" stroke-width="0.3">4</text><circle cx="393" cy="313.8" r="12.65" fill="#fff" stroke="#000" stroke-width="2.3"/><text transform="translate(393,0) scale(0.93,1)" x="0" y="321.1" text-anchor="middle" font-family="Liberation Sans" font-weight="700" font-size="20.5" fill="#000" stroke="#000" stroke-width="0.3">5</text><circle cx="393" cy="359.9" r="12.65" fill="#fff" stroke="#000" stroke-width="2.3"/><text transform="translate(393,0) scale(0.93,1)" x="0" y="367.2" text-anchor="middle" font-family="Liberation Sans" font-weight="700" font-size="20.5" fill="#000" stroke="#000" stroke-width="0.3">6</text><circle cx="460.9" cy="441.9" r="12.65" fill="#fff" stroke="#000" stroke-width="2.3"/><text transform="translate(460.9,0) scale(0.93,1)" x="0" y="449.2" text-anchor="middle" font-family="Liberation Sans" font-weight="700" font-size="20.5" fill="#000" stroke="#000" stroke-width="0.3">7</text></svg>
</body></html>
